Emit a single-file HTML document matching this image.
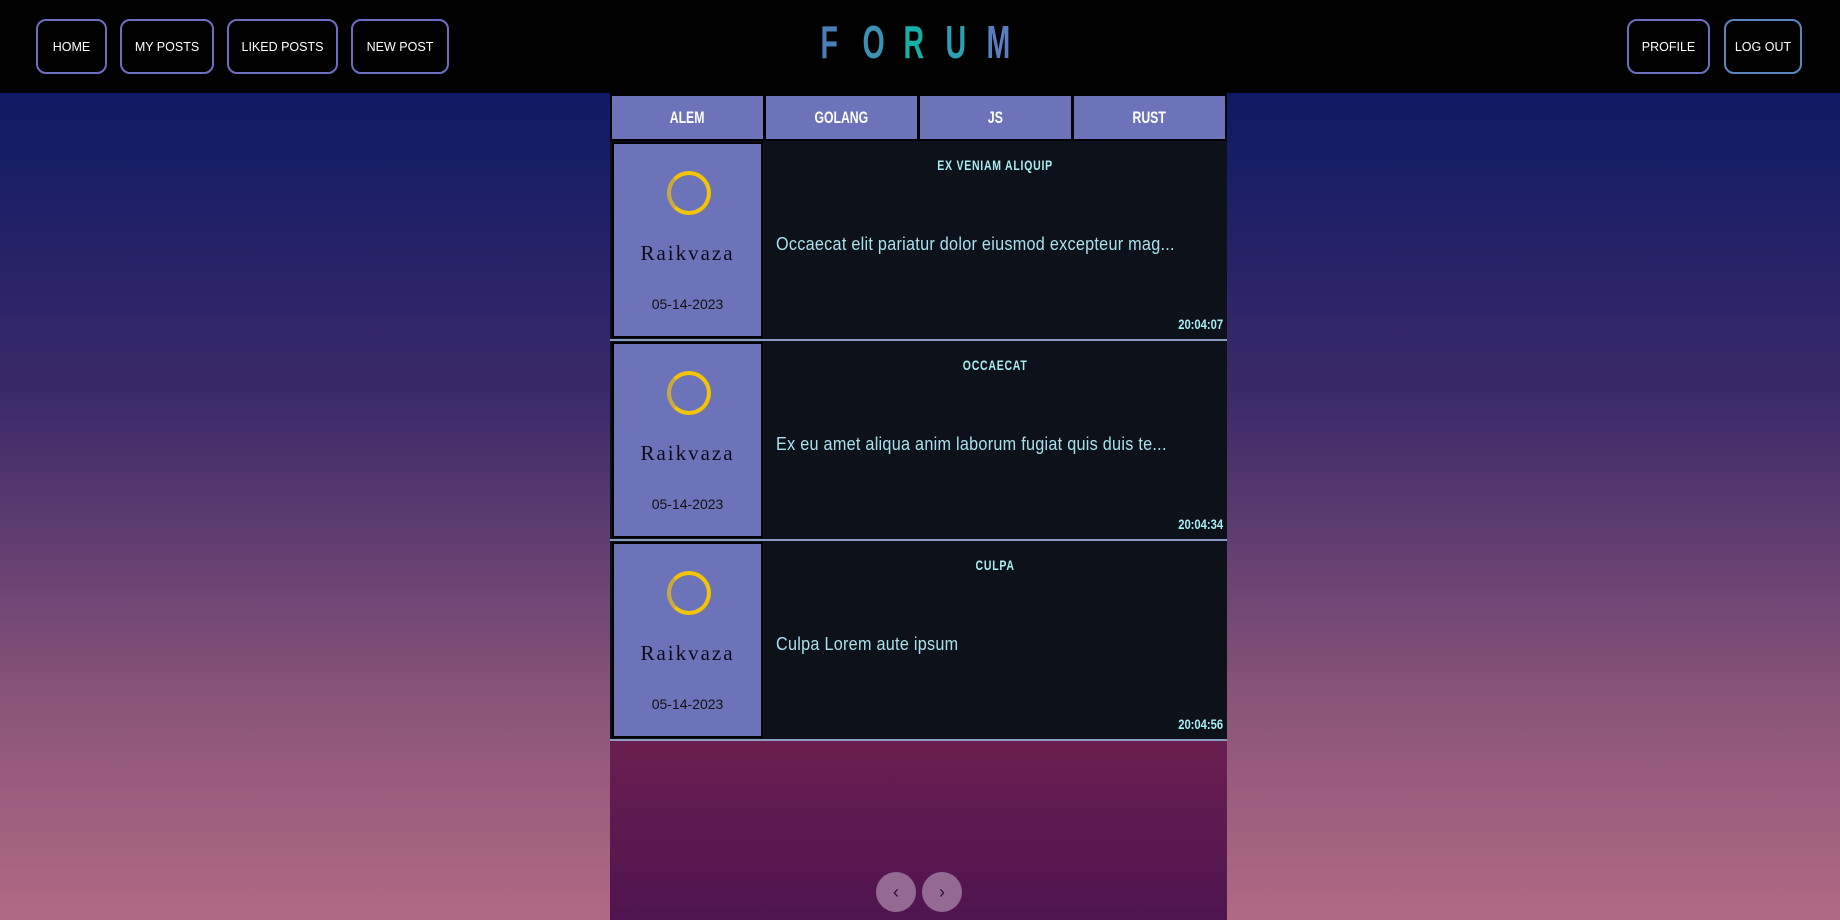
<!DOCTYPE html>
<html><head><meta charset="utf-8"><style>
*{margin:0;padding:0;box-sizing:border-box}
body{width:1840px;height:920px;overflow:hidden;position:relative;font-family:"Liberation Sans",sans-serif;
background:linear-gradient(180deg,#0a165e 0px,#0d1a63 93px,#3c2a6a 400px,#8a5478 700px,#b06a84 920px);}
.hdr{position:absolute;left:0;top:0;width:1840px;height:93px;background:#000}
.nb{position:absolute;top:19px;height:55px;border:2px solid #6c6fbf;border-radius:10px;color:#fff;font-size:12.5px;display:flex;align-items:center;justify-content:center;background:#000;white-space:nowrap}
.logo{position:absolute;left:816px;top:20px;width:190px;height:44px;display:flex;justify-content:space-between;font-size:46px;font-weight:bold;line-height:44px}
.logo span{display:inline-block;width:24px;text-align:center;transform:scaleX(.62)}
.main{position:absolute;left:610px;top:93px;width:617px;height:827px;background:linear-gradient(180deg,#6a1f4f 645px,#4f1450 827px)}
.tabs{position:absolute;left:0;top:0;width:617px;height:48px;background:#000}
.tab{position:absolute;top:3px;height:43px;width:151px;background:#6c73b9;color:#fff;font-weight:bold;font-size:17px;display:flex;align-items:center;justify-content:center}
.tab span{display:inline-block;transform:scaleX(.72)}
.card{position:absolute;left:0;width:617px;height:200px;background:#0d111a;border-bottom:2px solid #8a9cc0}
.lc{position:absolute;left:2px;top:1px;width:151px;height:196px;background:#6c73b9;border:2px solid #000}
.ring{position:absolute;left:53px;top:27px;width:44px;height:44px;border-radius:50%;border:4px solid #f5c400;border-left-color:#c9aa40}
.nm{position:absolute;left:0;width:147px;top:97px;text-align:center;font-family:"Liberation Serif",serif;font-size:21px;letter-spacing:2px;color:#0b0b1a}
.dt{position:absolute;left:0;width:147px;top:152px;text-align:center;font-size:14px;color:#111}
.tt{position:absolute;left:153px;width:464px;top:16px;text-align:center;color:#a8ecf4;font-weight:bold;font-size:14px;letter-spacing:1px}
.tt span{display:inline-block;transform:scaleX(.75)}
.bd{position:absolute;left:166px;top:93px;color:#a8e0ec;font-size:18px;letter-spacing:.3px;transform:scaleX(.9);transform-origin:left;white-space:nowrap}
.tm{position:absolute;right:4px;top:175px;color:#a8ecf4;font-weight:bold;font-size:14px}
.tm span{display:inline-block;transform:scaleX(.8);transform-origin:right}
.pg{position:absolute;top:779px;width:40px;height:40px;border-radius:50%;background:#946a92;color:#2a1030;font-size:18px;display:flex;align-items:center;justify-content:center}
</style></head><body>
<div class="hdr">
<div class="nb" style="left:36px;width:71px">HOME</div>
<div class="nb" style="left:120px;width:94px">MY POSTS</div>
<div class="nb" style="left:227px;width:111px">LIKED POSTS</div>
<div class="nb" style="left:351px;width:98px">NEW POST</div>
<div class="logo"><span style="color:#4a7fb8">F</span><span style="color:#3a92b4">O</span><span style="color:#17b0a8">R</span><span style="color:#2aa0b4">U</span><span style="color:#5a7ec0">M</span></div>
<div class="nb" style="left:1627px;width:83px">PROFILE</div>
<div class="nb" style="left:1724px;width:78px;border-color:#5a86c0">LOG OUT</div>
</div>
<div class="main">
<div class="tabs">
<div class="tab" style="left:2px"><span>ALEM</span></div>
<div class="tab" style="left:156px"><span>GOLANG</span></div>
<div class="tab" style="left:310px"><span>JS</span></div>
<div class="tab" style="left:464px"><span>RUST</span></div>
</div>
<div class="card" style="top:48px"><div class="lc"><div class="ring"></div><div class="nm">Raikvaza</div><div class="dt">05-14-2023</div></div>
<div class="tt"><span>EX VENIAM ALIQUIP</span></div><div class="bd">Occaecat elit pariatur dolor eiusmod excepteur mag...</div><div class="tm"><span>20:04:07</span></div></div>
<div class="card" style="top:248px"><div class="lc"><div class="ring"></div><div class="nm">Raikvaza</div><div class="dt">05-14-2023</div></div>
<div class="tt"><span>OCCAECAT</span></div><div class="bd">Ex eu amet aliqua anim laborum fugiat quis duis te...</div><div class="tm"><span>20:04:34</span></div></div>
<div class="card" style="top:448px"><div class="lc"><div class="ring"></div><div class="nm">Raikvaza</div><div class="dt">05-14-2023</div></div>
<div class="tt"><span>CULPA</span></div><div class="bd">Culpa Lorem aute ipsum</div><div class="tm"><span>20:04:56</span></div></div>
<div class="pg" style="left:266px">&#8249;</div>
<div class="pg" style="left:312px">&#8250;</div>
</div>
</body></html>
